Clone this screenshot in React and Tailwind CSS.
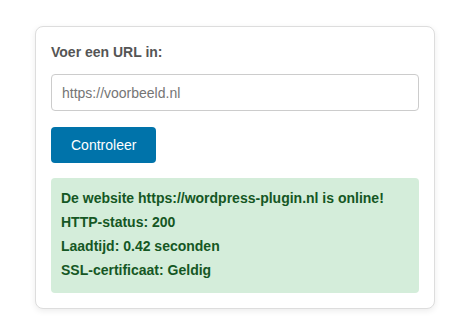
import React, { useState } from "react";

export default function App() {
  const [url, setUrl] = useState("");

  return (
    <div className="min-h-screen bg-white pt-[26px] font-['Liberation_Sans',Arial,sans-serif]">
      <div className="ml-[35px] w-[400px] rounded-lg border border-[#dddddd] bg-white p-[15px] shadow-[0_2px_6px_rgba(0,0,0,0.08)]">
        <label className="mb-[11px] block text-[14px] font-bold leading-[21px] text-[#555555]">
          Voer een URL in:
        </label>
        <input
          type="text"
          value={url}
          onChange={(e) => setUrl(e.target.value)}
          placeholder="https://voorbeeld.nl"
          className="block h-[37px] w-full rounded-[4px] border border-[#cccccc] px-[10px] text-[14px] text-[#333] outline-none placeholder:text-[#757575]"
        />
        <button className="mt-[16px] h-[36px] rounded-[4px] bg-[#0073aa] px-[20px] text-[14px] text-white">
          Controleer
        </button>
        <div className="mt-[15px] rounded-[4px] bg-[#d4edda] px-[10px] pt-[8px] pb-[11px] text-[14px] font-bold leading-[24px] text-[#155724]">
          <p>De website https://wordpress-plugin.nl is online!</p>
          <p>HTTP-status: 200</p>
          <p>Laadtijd: 0.42 seconden</p>
          <p>SSL-certificaat: Geldig</p>
        </div>
      </div>
    </div>
  );
}
